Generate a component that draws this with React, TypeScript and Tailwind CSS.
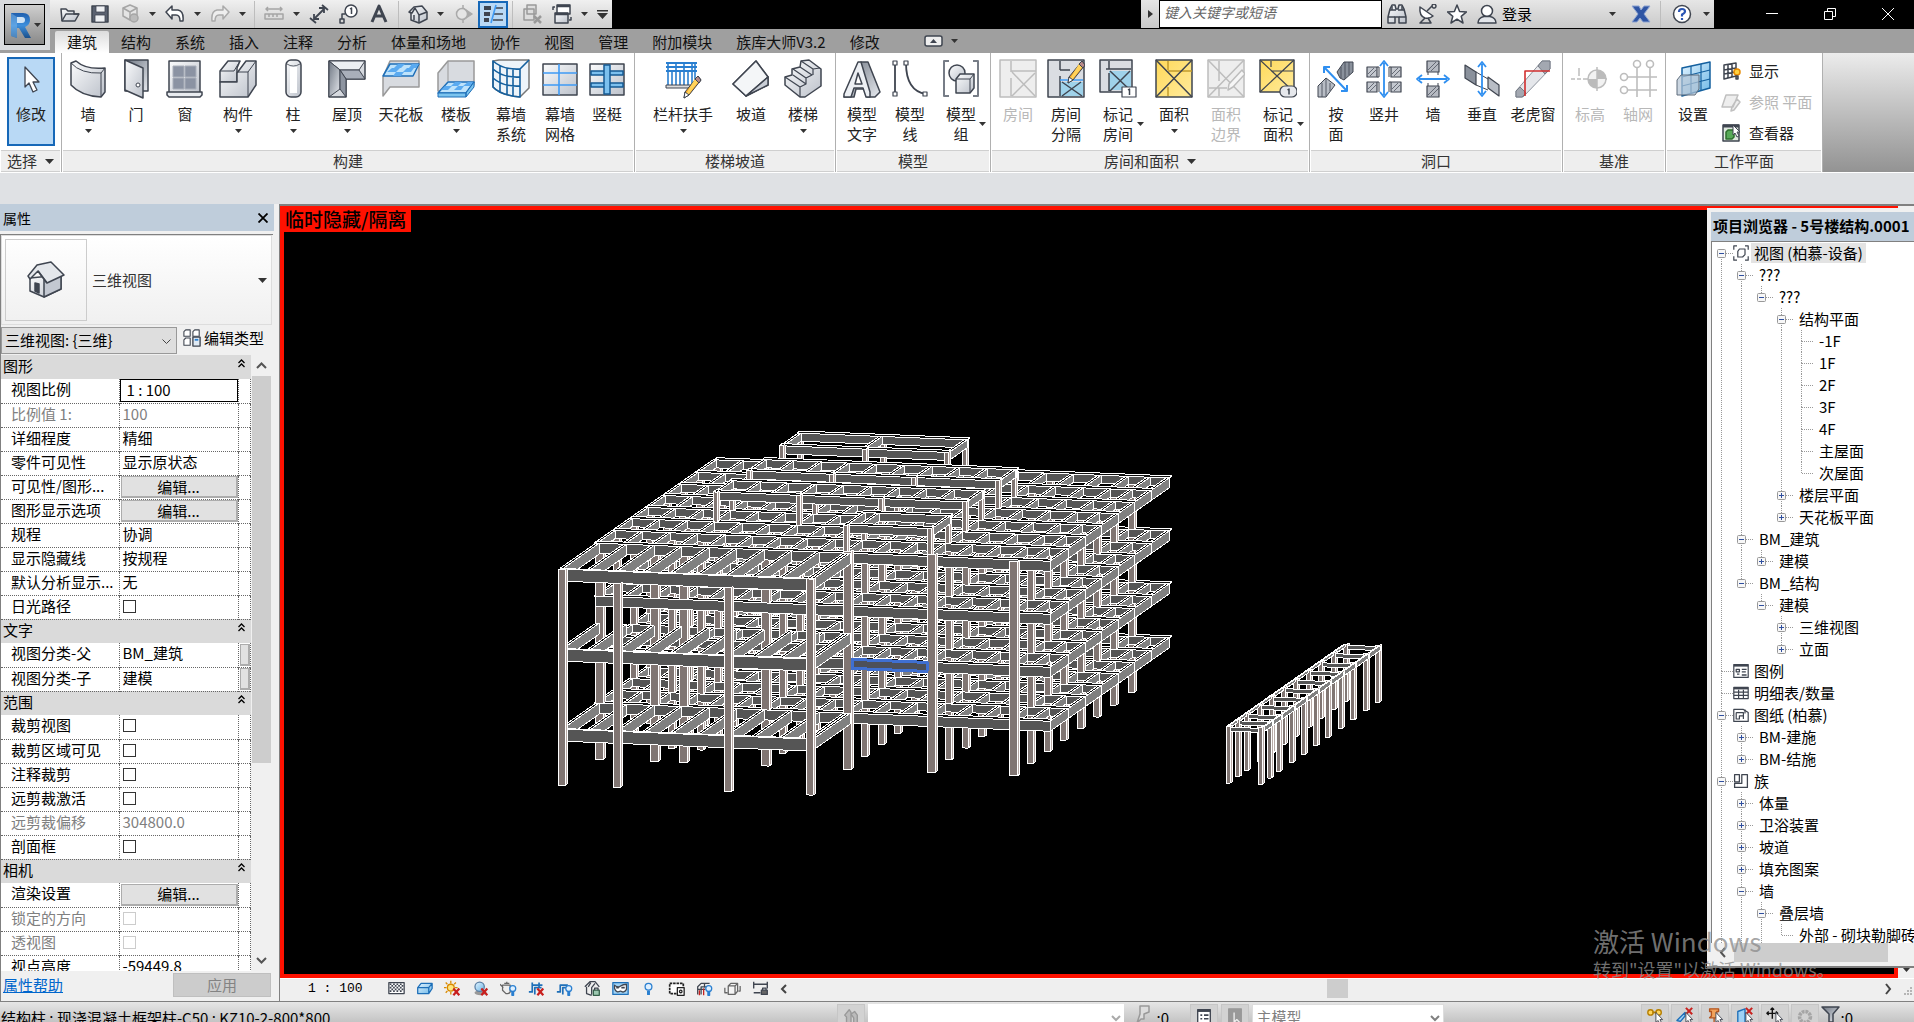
import { useState, type ReactNode } from 'react';
import { clsx } from 'clsx';

/* ---------- shared bits ---------- */

const INK = '#3f4550';
const METAL = 'url(#metal)';
const BLUE = '#2a7fd0';

function Defs() {
  return (
    <svg className="absolute h-0 w-0" aria-hidden="true">
      <defs>
        <linearGradient id="metal" x1="0" y1="0" x2="1" y2="1">
          <stop offset="0" stopColor="#fbfcfd" />
          <stop offset="1" stopColor="#bcc1ca" />
        </linearGradient>
        <linearGradient id="steel" x1="0" y1="0" x2="1" y2="1">
          <stop offset="0" stopColor="#6f7783" />
          <stop offset="1" stopColor="#e6e9ee" />
        </linearGradient>
        <linearGradient id="sky" x1="0" y1="0" x2="1" y2="1">
          <stop offset="0" stopColor="#e2f3ff" />
          <stop offset="1" stopColor="#6cb7e6" />
        </linearGradient>
        <linearGradient id="gold" x1="0" y1="0" x2="1" y2="1">
          <stop offset="0" stopColor="#ffd95a" />
          <stop offset="1" stopColor="#ffeb9c" />
        </linearGradient>
        <linearGradient id="logo" x1="0" y1="0" x2="0" y2="1">
          <stop offset="0" stopColor="#1f5fae" />
          <stop offset="0.5" stopColor="#3d8fdc" />
          <stop offset="1" stopColor="#1b4f8a" />
        </linearGradient>
      </defs>
    </svg>
  );
}

function Caret({ className }: { className?: string }) {
  return (
    <svg width="7" height="4" viewBox="0 0 7 4" className={className} aria-hidden="true">
      <path d="M0 0h7L3.5 4z" fill="#333" />
    </svg>
  );
}

function Small({ children, size = 20 }: { children: ReactNode; size?: number }) {
  return (
    <svg width={size} height={size} viewBox="0 0 20 20" fill="none" stroke={INK} strokeWidth="1.5" strokeLinejoin="round" aria-hidden="true">
      {children}
    </svg>
  );
}

function Big({ children }: { children: ReactNode }) {
  return (
    <svg width="38" height="40" viewBox="0 0 38 40" fill="none" stroke={INK} strokeWidth="1.5" strokeLinejoin="round" aria-hidden="true">
      {children}
    </svg>
  );
}

const pencil = (
  <g strokeWidth="1">
    <path d="M35 2l3 4-12 15-5 3 1-6z" fill="#f5a623" />
    <path d="M33 3l3 4-11 14-2-1z" fill="#ffd35c" stroke="none" />
    <path d="M35 2l3 4-2 3-4-4z" fill="#b98a8a" />
    <path d="M21 24l1-6 4 3z" fill="#fff" />
  </g>
);

/* ---------- ribbon icons ---------- */

const icons: Record<string, ReactNode> = {
  cursor: (
    <Big>
      <path d="M13 8v20l4-4 4 9 4-2-4-8h6z" fill="#fff" strokeWidth="1.3" />
    </Big>
  ),
  wall: (
    <Big>
      <path d="M2 4l5-2q10 9 29 7v24l-4 5Q12 37 2 26z" fill={METAL} />
      <path d="M2 4q10 11 30 10v24M32 14l4-5" strokeWidth="1" />
    </Big>
  ),
  door: (
    <Big>
      <path d="M8 1h23v31H8z" fill="url(#steel)" />
      <path d="M8 1l18 8v30L8 31z" fill={METAL} />
      <circle cx="21" cy="26" r="2" fill="#fff" strokeWidth="1" />
    </Big>
  ),
  window: (
    <Big>
      <path d="M3 2h31v32H3z" fill={METAL} />
      <path d="M7 7h11v11H7zM19 7h11v11H19zM7 19h11v11H7zM19 19h11v11H19z" fill="#8b93a3" stroke="#aab0bb" strokeWidth="1" />
      <path d="M1 33h35v3l-2 2H3l-2-2z" fill="#e9ecf0" />
    </Big>
  ),
  component: (
    <Big>
      <path d="M1 12l8-10h12l-3 7v14H1z" fill={METAL} />
      <path d="M1 23h17V14L27 2h10v24l-8 12H1z" fill={METAL} />
      <path d="M1 12h14l6-10M19 13h10l8-11M29 13v25" strokeWidth="1" />
    </Big>
  ),
  column: (
    <Big>
      <rect x="12" y="1" width="15" height="37" rx="5" fill={METAL} />
      <rect x="16" y="8" width="7" height="26" fill="#fff" stroke="none" />
      <path d="M13 5q6 4 13 0" strokeWidth="0.8" />
    </Big>
  ),
  roof: (
    <Big>
      <path d="M1 2h36v18H18v18H1z" fill={METAL} />
      <path d="M1 2l11 9h19l6-9z" fill="#eceff3" strokeWidth="1" />
      <path d="M1 2l11 9v19l-11 8z" fill="url(#steel)" strokeWidth="1" />
      <path d="M31 11l6 9H18l-6-9z" fill="#a9afba" strokeWidth="1" />
      <path d="M12 30l6 8V20l-6-9z" fill="#8d94a0" strokeWidth="1" />
    </Big>
  ),
  ceiling: (
    <Big>
      <path d="M8 2h29v26H8L1 37V18z" fill="#d8dbe0" stroke="#999" />
      <path d="M8 5h29l-6 12H1z" fill="#bfe3fb" stroke="#1e6fb8" />
      <path d="M16 5h7l-4 4h-7zM30 5h7l-3 4h-7zM10 9h8l-4 4H5zM25 9h7l-3 4h-8zM14 13h8l-3 4h-8z" fill="#5aaaf0" stroke="none" />
    </Big>
  ),
  floor: (
    <Big>
      <path d="M11 2h26v24L30 32H1V14z" fill="#d8dbe0" stroke="#999" />
      <path d="M11 2v20" stroke="#999" strokeWidth="1" />
      <path d="M11 23h26L29 34H1z" fill="#bfe3fb" stroke="#1e6fb8" />
      <path d="M18 23h7l-4 4h-7zM31 23h5l-3 4h-7zM8 27h7l-4 4H4zM21 27h6l-3 4h-7z" fill="#5aaaf0" stroke="none" />
      <path d="M1 34h28v4H1zM29 34l8-11v5l-8 10z" fill="#7cc4ee" stroke="#1e6fb8" strokeWidth="1" />
    </Big>
  ),
  curtain: (
    <Big>
      <path d="M1 2l6-1h30v28l-9 9Q8 36 1 28z" fill="#edf4fa" stroke="#777" />
      <path d="M1 2q10 9 27 8v28Q8 36 1 28zM1 10q10 9 27 8M1 19q10 9 27 8M8 6v28M15 9v27M21 10v27M28 10l9-9" stroke="#14609f" strokeWidth="1.6" />
    </Big>
  ),
  grid: (
    <Big>
      <path d="M2 5h34v31H2z" fill={METAL} />
      <path d="M2 14h34M2 26h34M18 5v31" stroke="#3f9bf5" strokeWidth="1.6" />
    </Big>
  ),
  mullion: (
    <Big>
      <path d="M2 5h34v31H2z" fill={METAL} />
      <path d="M3 12h32v4H3zM3 24h32v4H3z" fill="#7cc0ee" stroke="#145a94" />
      <path d="M16 6h6v29h-6z" fill="#7cc0ee" stroke="#145a94" />
    </Big>
  ),
  railing: (
    <Big>
      <path d="M2 4h31M2 8h31M2 12h31" stroke={BLUE} strokeWidth="2" />
      <path d="M4 4v23M8 12v15M12 4v23M16 12v15M20 4v23M24 12v15M28 4v23M31 4v20" stroke={BLUE} strokeWidth="1.6" />
      <path d="M2 26h28v3H2z" fill="#ddd" strokeWidth="1" />
      <g transform="translate(-1 15)">{pencil}</g>
    </Big>
  ),
  ramp: (
    <Big>
      <path d="M24 2l12 16v8L14 37 1 25z" fill={METAL} />
      <path d="M24 2L1 25l13 12L36 18z" fill="#f4f6f8" />
      <path d="M36 18v8L14 37z" fill="#c9ced6" />
    </Big>
  ),
  stair: (
    <Big>
      <path d="M17 2l8-1 12 9v17L21 38h-5L1 26v-8l7-2v-6l8-2z" fill={METAL} />
      <path d="M1 18l15 10 6-3-13-9M9 10l13 9v6M22 19l6-3-12-8M17 2l12 8v6M29 10l7-1M16 28v10" strokeWidth="1.2" />
    </Big>
  ),
  modelText: (
    <Big>
      <path d="M18 3h7l12 30-5 5h-8l-2-8h-9l-2 8H1l2-5z" fill="url(#steel)" />
      <path d="M18 3l9 30v5h-4l-3-9h-9l-3 9H1v-3L15 3z" fill="#eceff3" />
      <path d="M15 14l4 11h-7z" fill="#fff" />
    </Big>
  ),
  modelLine: (
    <Big>
      <path d="M4 4v31M15 4q0 28 20 31" strokeWidth="1.8" />
      <path d="M2 2h4v4H2zM2 33h4v4H2zM13 2h4v4h-4zM32 33h4v4h-4z" fill="#fff" strokeWidth="1.2" />
    </Big>
  ),
  modelGroup: (
    <Big>
      <path d="M7 2H2v35h5M31 2h5v35h-5" stroke="#777d87" strokeWidth="2" />
      <circle cx="15" cy="14" r="8" fill={METAL} />
      <path d="M14 20l4-5h14v14l-4 5H14z" fill={METAL} />
      <path d="M14 20h14v14M28 20l4-5" strokeWidth="1" />
    </Big>
  ),
  room: (
    <Big>
      <g stroke="#bdbdbd">
        <path d="M1 1h36v37H1z" fill="#eee" />
        <path d="M12 2v11M12 19v18M12 12h25M13 13l23 24M36 14L13 37" />
      </g>
    </Big>
  ),
  roomSplit: (
    <Big>
      <path d="M1 1h36v37H1z" fill="#dadde2" />
      <path d="M13 23h23v14H13z" fill="#9fd2ea" stroke="none" />
      <path d="M13 2v9M13 17v20M13 11h10M15 23l20 14M34 23L15 37" />
      <path d="M13 21h23" stroke="#3f9bf5" />
      {pencil}
    </Big>
  ),
  roomTag: (
    <Big>
      <path d="M1 1h32v32H1z" fill="#dadde2" />
      <path d="M10 12h22v19H10z" fill="#9fd2ea" stroke="none" />
      <path d="M10 2v8M10 14v18M7 10h25M11 12l20 19M31 12L11 32" />
      <rect x="23" y="28" width="14" height="10" fill="#fff" strokeWidth="1.2" />
      <path d="M29 31l1.5-1v6" strokeWidth="1.5" />
    </Big>
  ),
  area: (
    <Big>
      <path d="M1 1h36v37H1z" fill="url(#gold)" />
      <path d="M13 2v9M13 28v9M13 12h24" stroke="#c29c2d" />
      <path d="M1 1l36 37M37 1L1 38" />
    </Big>
  ),
  areaEdge: (
    <Big>
      <g stroke="#bdbdbd">
        <path d="M1 1h36v37H1z" fill="#eee" />
        <path d="M12 2v20M2 29h18M1 1l36 37M37 1L1 38M12 29v8" />
        <path d="M35 11l3 4-12 13-5 3 1-6z" fill="#f6f6f6" />
      </g>
    </Big>
  ),
  areaTag: (
    <Big>
      <path d="M1 1h34v32H1z" fill="url(#gold)" />
      <path d="M1 1l34 32M35 1L1 33M12 2v6M12 12h22" strokeWidth="1.2" />
      <rect x="21" y="27" width="17" height="11" rx="5" fill="#e6e8ec" strokeWidth="1.2" />
      <path d="M28.5 31l1.5-1v5.5" strokeWidth="1.5" />
    </Big>
  ),
  byFace: (
    <Big>
      <path d="M20 13L27 3h9v10L27 21l-4-2z" fill="#8a919c" strokeWidth="1" />
      <path d="M1 27l8-8 9 7L9 38H1z" fill="#b8bdc5" strokeWidth="1" />
      <path d="M24 8v11M28 3v17M32 3v13M5 24v14M9 20v17M13 24v8" strokeWidth="0.8" />
      <path d="M7 8l23 24M7 14V8h6M24 32h6v-6" stroke="#2f8ff0" strokeWidth="2" />
    </Big>
  ),
  shaft: (
    <Big>
      <g fill="#c4c8cf" strokeWidth="1.2">
        <path d="M2 8h10v10H2zM26 8h10v10H26zM2 23h10v10H2zM26 23h10v10H26z" />
      </g>
      <path d="M3 15l6-6M5 17l6-6M27 15l6-6M29 17l6-6M3 30l6-6M5 32l6-6M27 30l6-6M29 32l6-6" strokeWidth="0.7" />
      <path d="M12 8h2v10h-2M26 8h-2v10M12 23h2v10M26 23h-2v10" strokeWidth="1" />
      <path d="M19 4v32M15 7l4-5 4 5M15 33l4 5 4-5" stroke="#2f8ff0" strokeWidth="1.8" />
    </Big>
  ),
  wallOpening: (
    <Big>
      <path d="M13 2h12v11H13zM13 27h12v11H13z" fill="#b6bac2" strokeWidth="1.2" />
      <path d="M14 11l8-8M17 12l8-8M14 36l8-8M17 37l8-8" strokeWidth="0.7" />
      <path d="M14 13v3M24 13v3M14 24v3M24 24v3" strokeWidth="1" />
      <path d="M5 20h28M8 16l-5 4 5 4M30 16l5 4-5 4" stroke="#2f8ff0" strokeWidth="1.8" />
    </Big>
  ),
  vertical: (
    <Big>
      <path d="M2 6l11 7v13L2 19z" fill="#8a919c" strokeWidth="1.2" />
      <path d="M25 18l11 8v11l-11-8z" fill="#b8bdc5" strokeWidth="1.2" />
      <path d="M13 13l12 7M13 26l12 5" strokeWidth="1" />
      <path d="M19 5v30M15 8l4-5 4 5M15 32l4 5 4-5" stroke="#2f8ff0" strokeWidth="1.8" />
    </Big>
  ),
  dormer: (
    <Big>
      <path d="M2 32L28 2h8v8L9 38H2z" fill="#e5e7eb" strokeWidth="1" stroke="#8d939d" />
      <path d="M24 7l4-5h8v8l-5 5zM2 32l4-4 6 6-4 4H2z" fill="#a3a8b1" stroke="#777d87" strokeWidth="1" />
      <path d="M11 37V12h25" stroke="#d12f2f" strokeWidth="1.6" />
    </Big>
  ),
  level: (
    <Big>
      <g stroke="#bdbdbd">
        <path d="M0 20h4M6 20h4M12 20h4M16 20h20M8 9v8" />
        <circle cx="26" cy="20" r="9" fill="#f2f2f2" />
        <path d="M26 11v9h9a9 9 0 0 0-9-9zM26 29v-9h-9a9 9 0 0 0 9 9z" fill="#bbb" stroke="none" />
        <path d="M26 8v24" />
      </g>
    </Big>
  ),
  axes: (
    <Big>
      <g stroke="#bdbdbd" strokeWidth="1.6">
        <circle cx="18" cy="5" r="3.5" />
        <circle cx="31" cy="5" r="3.5" />
        <circle cx="5" cy="18" r="3.5" />
        <circle cx="5" cy="31" r="3.5" />
        <path d="M18 9v29M31 9v29M9 18h29M9 31h29" />
      </g>
    </Big>
  ),
  workPlane: (
    <Big>
      <path d="M8 9l28-6v26l-28 8z" fill="url(#sky)" stroke="#14609f" />
      <path d="M17 7v27M27 5v26M8 18l28-7M8 27l28-7" stroke="#14609f" strokeWidth="1.2" />
      <path d="M3 21l4-5h18v14l-4 6H3z" fill="#b5c4d4" fillOpacity="0.7" stroke="#5f6d7c" strokeWidth="1" />
    </Big>
  ),
};

/* ---------- title bar ---------- */

function QatButton({ label, active, children }: { label: string; active?: boolean; children: ReactNode }) {
  return (
    <button
      type="button"
      aria-label={label}
      className={clsx(
        'flex h-[27px] w-[30px] shrink-0 items-center justify-center',
        active && 'border-2 border-[#1668b8] bg-[#b9d9f5]'
      )}
    >
      <Small>{children}</Small>
    </button>
  );
}

function QatArrow() {
  return (
    <button type="button" aria-label="更多选项" className="flex h-[27px] w-[15px] shrink-0 items-center justify-center">
      <Caret />
    </button>
  );
}

function Divider() {
  return <span className="mx-1 h-[27px] w-px shrink-0 bg-[#bdbdbd]" />;
}

function QuickAccess() {
  return (
    <div className="flex h-7 shrink-0 items-center bg-linear-to-b from-[#f0f0f0] to-[#cfcfcf] pl-[5px]">
      <QatButton label="打开">
        <path d="M1 5h5l2 2h6v3h5l-4 7H2z" fill={METAL} />
        <path d="M2 17l4-7h13" />
      </QatButton>
      <QatButton label="保存">
        <path d="M2 2h16v16H2z" fill="#5a6170" />
        <path d="M6 2h9v6H6zM5 11h10v7H5z" fill="#eef0f3" strokeWidth="0.8" />
      </QatButton>
      <QatButton label="同步">
        <g stroke="#a5a5a5">
          <path d="M10 1l7 3v8l-7 4-7-4V4z" fill="#e4e4e4" />
          <path d="M3 4l7 4 7-4M10 8v8" />
          <circle cx="14" cy="14" r="4" fill="#bbb" />
        </g>
      </QatButton>
      <QatArrow />
      <QatButton label="放弃">
        <path d="M1 8l6-6v4h6q6 1 5 11h-3q0-6-4-6H7v4z" fill="#fff" />
      </QatButton>
      <QatArrow />
      <QatButton label="重做">
        <path d="M19 8l-6-6v4H7Q1 7 2 17h3q0-6 4-6h4v4z" fill="#eee" stroke="#aaa" />
      </QatButton>
      <QatArrow />
      <Divider />
      <QatButton label="测量">
        <g stroke="#a5a5a5">
          <path d="M2 5h16M4 3L2 5l2 2M16 3l2 2-2 2" />
          <path d="M1 10h18v5H1z" fill="#ddd" />
          <path d="M5 10v3M9 10v3M13 10v3" />
        </g>
      </QatButton>
      <QatArrow />
      <QatButton label="对齐尺寸标注">
        <path d="M5 15L15 5M10 4h5v5M5 10v5h5M1 14l6 5M13 1l6 5" strokeWidth="1.8" />
      </QatButton>
      <QatButton label="按类别标记">
        <circle cx="12" cy="7" r="6" fill="#fff" />
        <path d="M11 5l1.5-1v6M6 10H3v5" strokeWidth="1.5" />
        <path d="M1 15h4v4H1z" />
      </QatButton>
      <QatButton label="文字">
        <path d="M3 18L10 2l7 16M6 12h8" strokeWidth="3" />
      </QatButton>
      <Divider />
      <QatButton label="默认三维视图">
        <path d="M1 8l5-5 8-1 5 6v7l-8 4-8-3V9z" fill={METAL} />
        <path d="M11 19v-8l8-3M1 8l3 1 3-5 4 7M6 16v-5" />
      </QatButton>
      <QatArrow />
      <QatButton label="剖面">
        <path d="M10 1v18M10 4l9 6-9 6z" fill="#aaa" stroke="#aaa" />
        <circle cx="9" cy="10" r="5.5" fill="#e5e5e5" stroke="#aaa" />
      </QatButton>
      <QatButton label="细线" active>
        <path d="M1 4h7M1 10h6M1 16h5" strokeWidth="4" />
        <path d="M12 4h8M11 10h9M10 16h10" strokeWidth="1.5" />
        <path d="M13 1L8 19" stroke="#3f9bf5" strokeWidth="1.6" />
      </QatButton>
      <Divider />
      <QatButton label="关闭隐藏窗口">
        <g stroke="#999">
          <path d="M5 1h9v9H5zM2 5h10v11H2z" fill="#ddd" />
          <path d="M12 12l7 7M19 12l-7 7" strokeWidth="2.5" />
        </g>
      </QatButton>
      <QatButton label="切换窗口">
        <path d="M5 1h13v9H5z" fill="#fff" />
        <path d="M3 9h13v10H3z" fill={METAL} />
        <path d="M5 2h13M3 10h13" strokeWidth="2.5" />
        <path d="M1 6V3h2M19 13v3h-2" />
      </QatButton>
      <QatArrow />
      <button type="button" aria-label="自定义快速访问工具栏" className="flex h-[27px] w-5 items-center justify-center">
        <svg width="11" height="9" viewBox="0 0 11 9" aria-hidden="true">
          <path d="M0 0h11v1.5H0zM0 3h11L5.5 9z" fill="#333" />
        </svg>
      </button>
    </div>
  );
}

function InfoCenter() {
  return (
    <div className="flex h-7 shrink-0 items-center bg-linear-to-b from-[#e6e6e6] to-[#c9c9c9]">
      <button type="button" aria-label="展开搜索" className="flex h-7 w-[18px] items-center justify-center">
        <svg width="5" height="8" viewBox="0 0 5 8" aria-hidden="true">
          <path d="M0 0l5 4-5 4z" fill="#333" />
        </svg>
      </button>
      <input
        type="text"
        aria-label="搜索"
        placeholder="键入关键字或短语"
        className="h-7 w-[223px] border border-black bg-white px-1 pb-1 text-[14px] italic placeholder:text-[#666] placeholder:italic"
      />
      <QatButton label="查找">
        <path d="M3 5l2-4h3l1 4h2l1-4h3l2 4 2 8v6h-7v-6H8v6H1v-6z" fill={METAL} />
        <path d="M3 6h6M11 6h6M1 13h7M12 13h7M5 2v4M15 2v4" />
      </QatButton>
      <QatButton label="通讯中心">
        <path d="M3 3q-1 9 5 11 5 1 8-2z" fill="#fff" />
        <path d="M10 7l5-5M15 2a2 2 0 1 1 0 .1M8 14l-5 5h11l-3-5" strokeWidth="1.5" />
      </QatButton>
      <QatButton label="收藏夹">
        <path d="M10 1l2.6 6.5 6.9.4-5.3 4.4 1.8 6.7-6-3.8-6 3.8 1.8-6.7L.5 7.9l6.9-.4z" fill="#fff" />
      </QatButton>
      <QatButton label="用户">
        <circle cx="10" cy="7" r="5.5" fill="#fff" />
        <path d="M1 19q0-5 6-6.500h6q6 1.500 6 6.500z" fill="#e3e6ea" />
      </QatButton>
      <button type="button" className="flex h-7 w-[124px] items-center justify-between pr-2.5 text-[15px] leading-5">
        登录
        <Caret />
      </button>
      <QatButton label="应用商店">
        <path d="M1 2h7l2 4 3-4h6l-6 8 6 8h-7l-3-4-3 4H1l6-8z" fill="#2f55a4" stroke="#8fa5d2" strokeWidth="1" />
      </QatButton>
      <Divider />
      <button type="button" aria-label="帮助" className="flex h-7 w-[34px] items-center justify-center">
        <Small>
          <circle cx="10" cy="10" r="8.5" fill="#fff" />
          <path d="M7 8q0-3 3-3t3 2.5q0 1.5-3 3v2M10 14v2" stroke="#2a55b5" strokeWidth="2.2" />
        </Small>
      </button>
      <QatArrow />
    </div>
  );
}

function WindowControls() {
  return (
    <div className="flex h-7 w-[200px] shrink-0 items-center justify-end gap-[38px] pr-4 text-white">
      <button type="button" aria-label="最小化">
        <svg width="20" height="20" viewBox="0 0 20 20" stroke="#fff" aria-hidden="true">
          <path d="M4 9.5h12" />
        </svg>
      </button>
      <button type="button" aria-label="还原">
        <svg width="20" height="20" viewBox="0 0 20 20" fill="none" stroke="#fff" aria-hidden="true">
          <path d="M4.5 7.5h8v8h-8zM7.5 7V4.5h8v8H13" />
        </svg>
      </button>
      <button type="button" aria-label="关闭">
        <svg width="20" height="20" viewBox="0 0 20 20" stroke="#fff" aria-hidden="true">
          <path d="M4 4l12 12M16 4L4 16" />
        </svg>
      </button>
    </div>
  );
}

const tabs = ['建筑', '结构', '系统', '插入', '注释', '分析', '体量和场地', '协作', '视图', '管理', '附加模块', '族库大师V3.2', '修改'];

function TitleArea() {
  const [active, setActive] = useState('建筑');

  return (
    <header className="flex shrink-0 bg-[#9f9f9f]">
      <div className="h-[50px] w-[50px] shrink-0 bg-[#d9dbde] pt-1 pl-1">
        <button
          type="button"
          aria-label="应用程序菜单"
          className="flex h-[41px] w-[41px] items-center justify-center gap-px border border-black bg-linear-to-b from-[#cfcfcf] to-[#8a8a8a]"
        >
          <svg width="25" height="28" viewBox="0 0 25 28" aria-hidden="true">
            <path d="M3 2h12q7 0 7 7 0 5-5 7l6 11h-6l-6-10H9v10l-6-2z" fill="url(#logo)" />
            <path d="M9 6h5q3 0 3 3t-3 3H9z" fill="#cfe3f5" />
            <path d="M3 2l6 4v21l-6-2z" fill="#7db8ea" fillOpacity="0.5" />
          </svg>
          <Caret />
        </button>
      </div>
      <div className="flex min-w-0 flex-1 flex-col">
        <div className="flex h-[29px] items-start justify-between bg-black">
          <QuickAccess />
          <div className="flex">
            <InfoCenter />
            <WindowControls />
          </div>
        </div>
        <nav className="flex h-6 items-end pl-[5px]">
          {tabs.map((tab) => (
            <button
              key={tab}
              type="button"
              onClick={() => setActive(tab)}
              className={clsx(
                'h-[22px] shrink-0 px-3 text-[15px] leading-5 text-[#111]',
                tab === active && 'rounded-t-xs bg-linear-to-b from-[#dcdcdc] to-white'
              )}
            >
              {tab}
            </button>
          ))}
          <button type="button" aria-label="最小化面板" className="ml-8 flex h-6 items-center gap-2">
            <svg width="19" height="12" viewBox="0 0 19 12" aria-hidden="true">
              <rect x="1" y="1" width="17" height="10" rx="2" fill="#eee" stroke={INK} strokeWidth="1.5" />
              <path d="M6 8l3.500-4L13 8z" fill={INK} />
            </svg>
            <Caret />
          </button>
        </nav>
      </div>
    </header>
  );
}

/* ---------- ribbon ---------- */

type Tool = {
  icon: string;
  lines: string[];
  width: string;
  menu?: 'below' | 'side';
  off?: boolean;
};

type Panel = { title: string; menu?: boolean; pad: string; tools: Tool[] };

const panels: Panel[] = [
  {
    title: '构建',
    pad: 'px-px',
    tools: [
      { icon: 'wall', lines: ['墙'], width: 'w-12', menu: 'below' },
      { icon: 'door', lines: ['门'], width: 'w-12' },
      { icon: 'window', lines: ['窗'], width: 'w-[50px]' },
      { icon: 'component', lines: ['构件'], width: 'w-14', menu: 'below' },
      { icon: 'column', lines: ['柱'], width: 'w-[54px]', menu: 'below' },
      { icon: 'roof', lines: ['屋顶'], width: 'w-[54px]', menu: 'below' },
      { icon: 'ceiling', lines: ['天花板'], width: 'w-[54px]' },
      { icon: 'floor', lines: ['楼板'], width: 'w-14', menu: 'below' },
      { icon: 'curtain', lines: ['幕墙', '系统'], width: 'w-[54px]' },
      { icon: 'grid', lines: ['幕墙', '网格'], width: 'w-11' },
      { icon: 'mullion', lines: ['竖梃'], width: 'w-[50px]' },
    ],
  },
  {
    title: '楼梯坡道',
    pad: 'px-[7px]',
    tools: [
      { icon: 'railing', lines: ['栏杆扶手'], width: 'w-20', menu: 'below' },
      { icon: 'ramp', lines: ['坡道'], width: 'w-14' },
      { icon: 'stair', lines: ['楼梯'], width: 'w-12', menu: 'below' },
    ],
  },
  {
    title: '模型',
    pad: 'px-px',
    tools: [
      { icon: 'modelText', lines: ['模型', '文字'], width: 'w-12' },
      { icon: 'modelLine', lines: ['模型', '线'], width: 'w-12' },
      { icon: 'modelGroup', lines: ['模型', '组'], width: 'w-[54px]', menu: 'side' },
    ],
  },
  {
    title: '房间和面积',
    menu: true,
    pad: 'px-0.5',
    tools: [
      { icon: 'room', lines: ['房间'], width: 'w-12', off: true },
      { icon: 'roomSplit', lines: ['房间', '分隔'], width: 'w-12' },
      { icon: 'roomTag', lines: ['标记', '房间'], width: 'w-14', menu: 'side' },
      { icon: 'area', lines: ['面积'], width: 'w-14', menu: 'below' },
      { icon: 'areaEdge', lines: ['面积', '边界'], width: 'w-12', off: true },
      { icon: 'areaTag', lines: ['标记', '面积'], width: 'w-14', menu: 'side' },
    ],
  },
  {
    title: '洞口',
    pad: 'px-px',
    tools: [
      { icon: 'byFace', lines: ['按', '面'], width: 'w-12' },
      { icon: 'shaft', lines: ['竖井'], width: 'w-12' },
      { icon: 'wallOpening', lines: ['墙'], width: 'w-[50px]' },
      { icon: 'vertical', lines: ['垂直'], width: 'w-12' },
      { icon: 'dormer', lines: ['老虎窗'], width: 'w-[54px]' },
    ],
  },
  {
    title: '基准',
    pad: 'px-0.5',
    tools: [
      { icon: 'level', lines: ['标高'], width: 'w-12', off: true },
      { icon: 'axes', lines: ['轴网'], width: 'w-12', off: true },
    ],
  },
];

function ToolButton({ tool }: { tool: Tool }) {
  return (
    <button
      type="button"
      disabled={tool.off}
      className={clsx(
        'relative flex h-[97px] shrink-0 flex-col items-center pt-1.5 text-[15px] leading-5 whitespace-nowrap',
        tool.width,
        tool.off ? 'text-[#b8b8b8]' : 'text-[#222]'
      )}
    >
      {icons[tool.icon]}
      <span className="mt-[5px] flex flex-col items-center">
        {tool.lines.map((line) => (
          <span key={line}>{line}</span>
        ))}
      </span>
      {tool.menu === 'below' && <Caret className="mt-[5px]" />}
      {tool.menu === 'side' && <Caret className="absolute right-0.5 bottom-6" />}
    </button>
  );
}

function RibbonPanel({ title, menu, children, pad }: { title: string; menu?: boolean; children: ReactNode; pad?: string }) {
  return (
    <section className="flex shrink-0 flex-col border-r border-[#b0b0b0] bg-white pr-px pl-px">
      <div className={clsx('flex flex-1 items-start', pad)}>{children}</div>
      <h2 className="flex h-[22px] items-center justify-center gap-2 border-y border-[#cfcfcf] bg-[#eeeeee] text-[15px] leading-5 text-[#333]">
        {title}
        {menu && (
          <svg width="9" height="5" viewBox="0 0 9 5" aria-hidden="true">
            <path d="M0 0h9L4.5 5z" fill="#333" />
          </svg>
        )}
      </h2>
    </section>
  );
}

function Ribbon() {
  return (
    <div className="flex h-[120px] shrink-0 border-b border-white bg-linear-to-b from-[#ececec] to-[#939393]">
      <RibbonPanel title="选择" menu>
        <button
          type="button"
          className="mt-1 mr-[5px] ml-1.5 flex h-[89px] w-12 flex-col items-center border-2 border-[#1668b8] bg-[#b9d9f5] text-[15px] leading-5 text-[#222]"
        >
          {icons.cursor}
          <span className="mt-[5px]">修改</span>
        </button>
      </RibbonPanel>
      {panels.map((panel) => (
        <RibbonPanel key={panel.title} title={panel.title} menu={panel.menu} pad={panel.pad}>
          {panel.tools.map((tool) => (
            <ToolButton key={tool.icon} tool={tool} />
          ))}
        </RibbonPanel>
      ))}
      <RibbonPanel title="工作平面" pad="pl-0.5">
        <ToolButton tool={{ icon: 'workPlane', lines: ['设置'], width: 'w-12' }} />
        <div className="flex w-[104px] flex-col gap-[11px] pt-2 pl-1 text-[15px] leading-5 whitespace-nowrap text-[#222]">
          <button type="button" className="flex items-center gap-2">
            <Small>
              <path d="M3 4l12-2v13L3 18zM7 3v14M11 3v13M3 9l12-2M3 13l12-2" fill="#fff" />
              <circle cx="16" cy="11" r="3" fill="#ffd23f" stroke="#e68a00" />
              <path d="M15 15h2v3h-2z" fill="#888" />
            </Small>
            显示
          </button>
          <button type="button" disabled className="flex items-center gap-2 text-[#b8b8b8]">
            <Small>
              <path d="M5 3h12l-5 12H1zM16 7l3 3-6 8-3 1 1-4z" fill="#eee" stroke="#c0c0c0" />
            </Small>
            参照 平面
          </button>
          <button type="button" className="flex items-center gap-2">
            <Small>
              <path d="M2 2h16v16H2z" fill="#dfe8df" />
              <path d="M2 3h16" strokeWidth="3" />
              <path d="M5 9l2-2h6v7l-2 2H5z" fill="#57a957" stroke="#2c6e2c" />
              <path d="M12 2v10l2-2 2 4 2-1-2-4h3z" fill="#fff" strokeWidth="1" />
            </Small>
            查看器
          </button>
        </div>
      </RibbonPanel>
    </div>
  );
}

/* ---------- properties palette ---------- */

type Prop = { name: string; value?: string; kind?: 'edit' | 'check' | 'scale' | 'more'; off?: boolean };

const groups: { title: string; rows: Prop[] }[] = [
  {
    title: '图形',
    rows: [
      { name: '视图比例', value: '1 : 100', kind: 'scale' },
      { name: '比例值 1:', value: '100', off: true },
      { name: '详细程度', value: '精细' },
      { name: '零件可见性', value: '显示原状态' },
      { name: '可见性/图形...', kind: 'edit' },
      { name: '图形显示选项', kind: 'edit' },
      { name: '规程', value: '协调' },
      { name: '显示隐藏线', value: '按规程' },
      { name: '默认分析显示...', value: '无' },
      { name: '日光路径', kind: 'check' },
    ],
  },
  {
    title: '文字',
    rows: [
      { name: '视图分类-父', value: 'BM_建筑', kind: 'more' },
      { name: '视图分类-子', value: '建模', kind: 'more' },
    ],
  },
  {
    title: '范围',
    rows: [
      { name: '裁剪视图', kind: 'check' },
      { name: '裁剪区域可见', kind: 'check' },
      { name: '注释裁剪', kind: 'check' },
      { name: '远剪裁激活', kind: 'check' },
      { name: '远剪裁偏移', value: '304800.0', off: true },
      { name: '剖面框', kind: 'check' },
    ],
  },
  {
    title: '相机',
    rows: [
      { name: '渲染设置', kind: 'edit' },
      { name: '锁定的方向', kind: 'check', off: true },
      { name: '透视图', kind: 'check', off: true },
      { name: '视点高度', value: '-59449.8' },
    ],
  },
];

function PropValue({ row }: { row: Prop }) {
  if (row.kind === 'edit') {
    return (
      <button
        type="button"
        aria-label={`${row.name} 编辑`}
        className="mx-px block h-[22px] w-[117px] border border-r-2 border-b-2 border-[#acacac] bg-[#e1e1e1] text-center leading-[18px]"
      >
        编辑...
      </button>
    );
  }
  if (row.kind === 'check') {
    return (
      <input
        type="checkbox"
        aria-label={row.name}
        disabled={row.off}
        className="mb-0.5 ml-[3px] block h-[13px] w-[13px] appearance-none border border-[#333] bg-white checked:bg-[#333] disabled:border-[#ccc]"
      />
    );
  }
  if (row.kind === 'scale') {
    return (
      <input
        type="text"
        aria-label={row.name}
        defaultValue={row.value}
        className="block h-[23px] w-[118px] border border-black px-1.5 pb-0.5 leading-5"
      />
    );
  }
  return <span className="block pb-[3px] pl-[3px]">{row.value}</span>;
}

function PropertiesPalette() {
  return (
    <aside className="flex w-[279px] shrink-0 flex-col bg-[#f0f0f0] text-[15px] leading-5">
      <div className="mr-[5px] flex h-[27px] shrink-0 items-center justify-between bg-[#bfcddb] pr-1.5 pl-[3px] text-[14px]">
        属性
        <button type="button" aria-label="关闭属性">
          <svg width="10" height="10" viewBox="0 0 10 10" stroke="#000" strokeWidth="1.8" aria-hidden="true">
            <path d="M0.5 0.5l9 9M9.5 0.5l-9 9" />
          </svg>
        </button>
      </div>
      <div className="mt-[3px] mr-1.5 flex min-h-0 flex-1 flex-col border-t border-l border-[#808080] pr-px">
        <button
          type="button"
          className="flex h-[90px] shrink-0 items-center border border-[#ddd] bg-linear-to-b from-white to-[#f0f0f0] pr-1 pl-[3px] text-[#333]"
        >
          <span className="flex h-[82px] w-[82px] items-center justify-center border border-[#ccc]">
            <svg width="38" height="38" viewBox="0 0 38 38" fill="none" stroke={INK} strokeWidth="1.5" strokeLinejoin="round" aria-hidden="true">
              <path d="M3 17v13l14 6 17-8V14z" fill={METAL} />
              <path d="M17 36V19l17-6v15z" fill="#c3c8d1" />
              <path d="M1 15l9-11L24 1l13 13-17 8-9-12-8 8z" fill="#e4e7eb" />
              <path d="M11 10L20 22" />
              <path d="M8 22l4 1v9l-4-2z" fill={INK} />
            </svg>
          </span>
          <span className="ml-[5px] flex-1 text-left">三维视图</span>
          <svg width="9" height="5" viewBox="0 0 9 5" aria-hidden="true">
            <path d="M0 0h9L4.5 5z" fill="#333" />
          </svg>
        </button>
        <div className="flex h-[30px] shrink-0 items-center gap-1.5">
          <span className="relative">
            <select aria-label="类型实例" className="h-[27px] w-[176px] appearance-none border border-[#999] bg-[#dedede] pl-[3px] leading-5">
              <option>三维视图: {'{三维}'}</option>
            </select>
            <svg width="9" height="6" viewBox="0 0 9 6" fill="none" stroke="#444" className="pointer-events-none absolute top-3 right-1.5" aria-hidden="true">
              <path d="M0.5 0.5l4 4 4-4" />
            </svg>
          </span>
          <button type="button" className="flex items-center gap-[3px] pb-1">
            <Small size={18}>
              <path d="M1 3l2-2h5v7H1zM11 3l2-2h5v7h-7zM1 12l2-2h5v8H1z" fill="#fff" strokeWidth="1.2" />
              <rect x="11" y="9" width="8" height="10" fill="#dfe9f3" />
              <path d="M13 12h4" stroke={BLUE} strokeWidth="2" />
            </Small>
            编辑类型
          </button>
        </div>
        <div className="flex min-h-0 flex-1">
          <div className="w-[250px] overflow-hidden bg-white">
            <table className="w-full table-fixed border-collapse">
              <colgroup>
                <col className="w-[118px]" />
                <col className="w-[119px]" />
                <col />
              </colgroup>
              {groups.map((group) => (
                <tbody key={group.title}>
                  <tr className="h-6 bg-[#dadada]">
                    <th colSpan={2} className="p-0 pb-0.5 pl-0.5 text-left font-normal">
                      {group.title}
                    </th>
                    <td className="p-0">
                      <svg width="7" height="9" viewBox="0 0 7 9" fill="none" stroke="#000" strokeWidth="1.3" className="mb-2" aria-hidden="true">
                        <path d="M0.5 4l3-3 3 3M0.5 8l3-3 3 3" />
                      </svg>
                    </td>
                  </tr>
                  {group.rows.map((row) => (
                    <tr key={row.name} className={clsx('h-6 border-b border-dotted border-[#666]', row.off && 'text-[#808080]')}>
                      <th className="overflow-hidden border-r border-dotted border-[#666] p-0 pb-[3px] pl-2.5 text-left font-normal whitespace-nowrap">
                        {row.name}
                      </th>
                      <td className="border-r border-dotted border-[#666] p-0">
                        <PropValue row={row} />
                      </td>
                      <td className="border-r border-dotted border-[#666] p-0">
                        {row.kind === 'more' && (
                          <button
                            type="button"
                            aria-label={`${row.name} 更多`}
                            className="ml-px block h-[22px] w-2.5 border border-r-2 border-b-2 border-[#acacac] bg-[#e1e1e1]"
                          />
                        )}
                      </td>
                    </tr>
                  ))}
                </tbody>
              ))}
            </table>
          </div>
          <div className="ml-px flex w-[19px] flex-col items-center">
            <svg width="19" height="21" viewBox="0 0 19 21" fill="none" stroke="#555" strokeWidth="2" aria-hidden="true">
              <path d="M5 13l4.5-4.5L14 13" />
            </svg>
            <div className="h-[387px] w-full bg-[#cdcdcd]" />
            <svg width="19" height="21" viewBox="0 0 19 21" fill="none" stroke="#555" strokeWidth="2" className="mt-auto" aria-hidden="true">
              <path d="M5 8l4.5 4.5L14 8" />
            </svg>
          </div>
        </div>
        <div className="flex h-[30px] shrink-0 items-start justify-between pt-0.5 pr-px pl-0.5">
          <a href="#help" className="pt-0.5 text-[#0066cc] underline">
            属性帮助
          </a>
          <button type="button" disabled className="h-6 w-[98px] border border-[#bfbfbf] bg-[#cccccc] text-[#838383]">
            应用
          </button>
        </div>
      </div>
    </aside>
  );
}

/* ---------- 3D model ---------- */

type Pt = [number, number];

// Parallel projection: u runs along the facade, v into the depth, z is height above the roof line
function makeProjection(ox: number, oy: number) {
  return (u: number, v: number, z: number): Pt => [ox + u + v, oy + 0.04 * u - 0.7 * v - z];
}

const poly = (...pts: Pt[]) => pts.map(([x, y]) => `${x.toFixed(1)},${y.toFixed(1)}`).join(' ');

type Face = { points: string; fill: string; stroke?: string };

type Projection = ReturnType<typeof makeProjection>;

function beamU(p: Projection, u0: number, u1: number, v: number, z: number, h: number, depth = 3): Face[] {
  return [
    { points: poly(p(u0, v, z), p(u1, v, z), p(u1, v + depth, z), p(u0, v + depth, z)), fill: '#111' },
    { points: poly(p(u0, v, z), p(u1, v, z), p(u1, v, z - h), p(u0, v, z - h)), fill: '#555555' },
  ];
}

function beamV(p: Projection, u: number, v0: number, v1: number, z: number, h: number, depth = 3): Face[] {
  return [
    { points: poly(p(u, v0, z), p(u, v1, z), p(u, v1, z - h), p(u, v0, z - h)), fill: '#808080' },
    { points: poly(p(u - depth, v0, z), p(u, v0, z), p(u, v1, z), p(u - depth, v1, z)), fill: '#111' },
  ];
}

function post(p: Projection, u: number, v: number, z0: number, z1: number, w: number): Face[] {
  return [
    { points: poly(p(u + w, v, z0), p(u + w, v + 2, z0), p(u + w, v + 2, z1), p(u + w, v, z1)), fill: '#b8aaa6' },
    { points: poly(p(u, v, z0), p(u + w, v, z0), p(u + w, v, z1), p(u, v, z1)), fill: '#807572' },
  ];
}

const range = (from: number, to: number, step: number) => {
  const out: number[] = [];
  for (let n = from; n <= to; n += step) out.push(n);
  return out;
};

function buildBlock(): Face[] {
  const p = makeProjection(558, 569);
  const faces: Face[] = [];
  const rows = [156, 138, 121, 105, 88, 72, 55, 37];
  const levels = [-160, -106, -53, 0];
  const cols = [0, 55, 84, 166, 248, 332, 414];
  const bays = [...range(2, 420, 27.5), 436, 455];
  // penthouse frames standing on the roof: front row, back row, extent and height
  const frames = [
    { front: 138, back: 156, from: 83, to: 248, z: 30, posts: [83, 166, 248], beams: [87, 168, 253] },
    { front: 105, back: 121, from: 83, to: 332, z: 28, posts: [83, 166, 248, 332], beams: range(87, 337, 27.7) },
    { front: 72, back: 88, from: 83, to: 332, z: 30, posts: [83, 166, 248, 332], beams: range(87, 337, 27.7) },
    { front: 37, back: 55, from: 248, to: 332, z: 28, posts: [248, 332], beams: [252, 266, 337] },
  ];

  rows.forEach((v, i) => {
    const w = v === 37 ? 8 : 6;
    const behind = rows[i - 1];
    levels.forEach((z, li) => {
      const h = 8;
      if (behind !== undefined) {
        bays.forEach((u) => faces.push(...beamV(p, u, v, behind, z, u === 455 ? 10 : h)));
      }
      cols.forEach((u) => faces.push(...post(p, u, v, li === 0 ? -216 : levels[li - 1], z, w)));
      faces.push(...beamU(p, 0, 455, v, z, v === 37 ? 10 : h));
    });
    frames.forEach((f) => {
      if (f.back === v) {
        f.posts.forEach((u) => faces.push(...post(p, u, v, 0, f.z, 4)));
        faces.push(...beamU(p, f.from, f.to + 5, v, f.z, 8));
      }
      if (f.front === v) {
        f.beams.forEach((u) => faces.push(...beamV(p, u, f.front, f.back, f.z, 8)));
        faces.push(...beamU(p, f.from, f.to + 5, v, f.z, 8));
        f.posts.forEach((u) => faces.push(...post(p, u, v, 0, f.z, 4)));
      }
    });
  });

  // the main facade posts run in front of the beams
  [248, 332, 414].forEach((u) => faces.push(...post(p, u, 37, -216, u === 414 ? -2 : 2, 8)));
  faces.push({
    points: poly(p(257, 37, -106), p(332, 37, -106), p(332, 37, -115), p(257, 37, -115)),
    fill: '#4d5058',
    stroke: '#3f6fd0',
  });

  // protruding wing with two double-height storeys
  const wing = [-160, -80, 0];
  wing.forEach((z) => {
    range(4, 252, 27.5).concat(255).forEach((u) => faces.push(...beamV(p, u, 1, 37, z, 11)));
  });
  wing.forEach((z) => faces.push(...beamU(p, 2, 252, 0, z, 12, 1)));
  [0, 55, 166, 248].forEach((u) => {
    faces.push(...post(p, u, 0, -216, u === 0 || u === 248 ? 0 : -12, 7));
  });
  return faces;
}

function buildPergola(): Face[] {
  const p = makeProjection(1226, 726);
  const faces: Face[] = [];
  const stations = [117, 105, 92, 80, 67, 55, 43, 31, 18, 9, 0];
  stations.forEach((v, i) => {
    const behind = stations[i - 1];
    if (behind !== undefined) {
      faces.push(...beamV(p, 2, v, behind, 0, 3, 1));
      faces.push(...beamV(p, 37, v, behind, 0, 5, 1));
    }
    faces.push(...post(p, 0, v, -57, 0, 4));
    faces.push(...post(p, 32, v, -57, 0, 4));
    faces.push(...beamU(p, 4, 32, v, -1, 4, 0));
  });
  return faces;
}

const modelFaces = [...buildBlock(), ...buildPergola()];

function Viewport() {
  return (
    <div className="flex min-h-0 flex-1 bg-[#f0f0f0]">
      <div className="relative min-w-0 flex-1 overflow-hidden border-4 border-[#ff1100] bg-black">
        <svg className="block h-full w-full" shapeRendering="crispEdges" role="img" aria-label="三维模型">
          <g transform="translate(-284 -210)" strokeWidth="1" strokeLinejoin="round">
            {modelFaces.map((face, i) => (
              <polygon key={i} points={face.points} fill={face.fill} stroke={face.stroke ?? '#fff'} strokeWidth={face.stroke ? 3 : 1} />
            ))}
          </g>
        </svg>
        <span className="absolute top-0 left-0 h-[22px] bg-[#ff1100] pr-[5px] pl-px text-[19px] leading-[17px] font-medium text-black">
          临时隐藏/隔离
        </span>
      </div>
      <div className="flex w-4 shrink-0 items-end justify-center pb-1.5">
        <Caret />
      </div>
    </div>
  );
}

/* ---------- project browser ---------- */

type Node = { level: number; text: string; mark?: '+' | '-'; icon?: 'views' | 'legend' | 'schedule' | 'sheets' | 'family' };

const nodes: Node[] = [
  { level: 0, text: '视图 (柏慕-设备)', mark: '-', icon: 'views' },
  { level: 1, text: '???', mark: '-' },
  { level: 2, text: '???', mark: '-' },
  { level: 3, text: '结构平面', mark: '-' },
  { level: 4, text: '-1F' },
  { level: 4, text: '1F' },
  { level: 4, text: '2F' },
  { level: 4, text: '3F' },
  { level: 4, text: '4F' },
  { level: 4, text: '主屋面' },
  { level: 4, text: '次屋面' },
  { level: 3, text: '楼层平面', mark: '+' },
  { level: 3, text: '天花板平面', mark: '+' },
  { level: 1, text: 'BM_建筑', mark: '-' },
  { level: 2, text: '建模', mark: '+' },
  { level: 1, text: 'BM_结构', mark: '-' },
  { level: 2, text: '建模', mark: '-' },
  { level: 3, text: '三维视图', mark: '+' },
  { level: 3, text: '立面', mark: '+' },
  { level: 0, text: '图例', icon: 'legend' },
  { level: 0, text: '明细表/数量', icon: 'schedule' },
  { level: 0, text: '图纸 (柏慕)', mark: '-', icon: 'sheets' },
  { level: 1, text: 'BM-建施', mark: '+' },
  { level: 1, text: 'BM-结施', mark: '+' },
  { level: 0, text: '族', mark: '-', icon: 'family' },
  { level: 1, text: '体量', mark: '+' },
  { level: 1, text: '卫浴装置', mark: '+' },
  { level: 1, text: '坡道', mark: '+' },
  { level: 1, text: '填充图案', mark: '+' },
  { level: 1, text: '墙', mark: '-' },
  { level: 2, text: '叠层墙', mark: '-' },
  { level: 3, text: '外部 - 砌块勒脚砖' },
];

function continues(index: number, level: number) {
  for (let j = index + 1; j < nodes.length; j++) {
    if (nodes[j].level < level) return false;
    if (nodes[j].level === level) return true;
  }
  return level < 3;
}

const nodeIcons = {
  views: (
    <Small size={16}>
      <path d="M5 1H1v5M15 1h4v5M5 19H1v-5M15 19h4v-5" />
      <path d="M6 8l2-3h7v7l-3 3H6z" fill="#fff" />
    </Small>
  ),
  legend: (
    <Small size={16}>
      <path d="M1 2h18v16H1z" fill="#fff" />
      <path d="M1 3h18" strokeWidth="3" />
      <path d="M4 8h4v3H4zM5 14h3M11 8h6M11 11h5M11 15h6" strokeWidth="1.6" />
    </Small>
  ),
  schedule: (
    <Small size={16}>
      <path d="M1 3h18v14H1z" fill="#fff" />
      <path d="M1 4h18" strokeWidth="3" />
      <path d="M1 9h18M1 13h18M7 6v11M13 6v11" />
    </Small>
  ),
  sheets: (
    <Small size={16}>
      <path d="M1 3h12l6 4v11H1z" fill="#fff" />
      <path d="M4 7h9v8M4 7v8h4v-4h5M15 3v5" />
    </Small>
  ),
  family: (
    <Small size={16}>
      <path d="M2 2h6v9H2zM11 2h7v16H2v-5h9z" fill="#fff" strokeWidth="1.6" />
    </Small>
  ),
};

function TreeRow({ node, index }: { node: Node; index: number }) {
  const mid = (
    <svg width="20" height="22" viewBox="0 0 20 22" fill="none" stroke="#999" strokeDasharray="1 1" aria-hidden="true">
      {index > 0 && <path d="M8.5 0v11" />}
      {continues(index, node.level) && <path d="M8.5 11v11" />}
      <path d="M9 11.5h11" />
      {node.mark && (
        <g strokeDasharray="none">
          <rect x="4.5" y="7.5" width="8" height="8" rx="1" fill="#f7f7f7" />
          <path d={node.mark === '+' ? 'M6 11.5h5M8.5 9v5' : 'M6 11.5h5'} stroke="#2f4f9f" />
        </g>
      )}
    </svg>
  );

  return (
    <li className="flex h-[22px] items-center whitespace-nowrap">
      {Array.from({ length: node.level }, (_, k) => (
        <svg key={k} width="20" height="22" viewBox="0 0 20 22" stroke="#999" strokeDasharray="1 1" className="shrink-0" aria-hidden="true">
          {continues(index, k) && <path d="M8.5 0v22" />}
        </svg>
      ))}
      {node.mark ? (
        <button type="button" className="shrink-0" aria-label={`${node.mark === '+' ? '展开' : '折叠'} ${node.text}`}>
          {mid}
        </button>
      ) : (
        <span className="shrink-0">{mid}</span>
      )}
      {node.icon && <span className="shrink-0">{nodeIcons[node.icon]}</span>}
      <span className={clsx('px-[3px]', node.icon ? 'ml-0.5' : 'ml-[3px]', index === 0 && 'bg-[#e3e3e3]')}>{node.text}</span>
    </li>
  );
}

function ProjectBrowser() {
  return (
    <aside className="absolute top-1 right-0 bottom-[33px] flex w-[207px] flex-col overflow-hidden border-b-2 border-[#808080] bg-[#f0f0f0] pt-1 pl-1 text-[15px] leading-5">
      <h2 className="h-[29px] shrink-0 bg-[#bfcddb] pt-1 pl-0.5 text-[15px] leading-5 font-bold whitespace-nowrap">项目浏览器 - 5号楼结构.0001</h2>
      <ul className="min-h-0 flex-1 overflow-hidden border-t border-l border-[#808080] bg-white pl-px">
        {nodes.map((node, i) => (
          <TreeRow key={i} node={node} index={i} />
        ))}
      </ul>
      <div className="flex h-[19px] shrink-0 items-center pl-1.5">
        <svg width="17" height="19" viewBox="0 0 17 19" fill="none" stroke="#555" strokeWidth="2" aria-hidden="true">
          <path d="M8 5L4 9.5 8 14" />
        </svg>
        <div className="h-[19px] w-[154px] bg-[#cdcdcd]" />
      </div>
      <div className="h-1 shrink-0" />
    </aside>
  );
}

/* ---------- bottom bars ---------- */

const redX = <path d="M11 10l7 8M18 10l-7 8" stroke="#c8201e" strokeWidth="2.6" />;
const bulb = (
  <>
    <circle cx="15" cy="10" r="3.5" fill="#dff0ff" stroke="#2a7fd0" />
    <path d="M14 14h2v4h-2z" fill="#2a7fd0" stroke="#2a7fd0" />
  </>
);

const viewTools: { label: string; art: ReactNode }[] = [
  {
    label: '详细程度',
    art: (
      <>
        <path d="M1 3h18v13H1z" fill="#fff" />
        <path d="M2 5h16M2 9h16M2 13h16" strokeWidth="2" strokeDasharray="2 2" />
        <path d="M4 7h14M4 11h14" strokeWidth="2" strokeDasharray="2 2" />
      </>
    ),
  },
  {
    label: '视觉样式',
    art: <path d="M2 9l4-5h13v6l-4 6H2zM2 9h13v7M15 9l4-5" fill="url(#sky)" stroke="#1e6fb8" />,
  },
  {
    label: '日光路径',
    art: (
      <>
        <circle cx="8" cy="9" r="4" fill="#ffe680" stroke="#d98a00" />
        <path d="M8 1v3M8 14v3M0 9h3M13 9h3M2 3l2 2M14 3l-2 2M2 15l2-2" stroke="#d98a00" />
        {redX}
      </>
    ),
  },
  {
    label: '阴影',
    art: (
      <>
        <ellipse cx="10" cy="15" rx="7" ry="3" fill="#999" stroke="none" />
        <circle cx="9" cy="8" r="5.5" fill="url(#sky)" stroke="#5a7fa5" />
        {redX}
      </>
    ),
  },
  {
    label: '渲染',
    art: (
      <>
        <path d="M3 6h9v8q-1 2-3 2H7L3 12zM0 5l4 4M5 4h6M8 2v2" fill="#eee" stroke="#666" />
        {bulb}
      </>
    ),
  },
  {
    label: '裁剪视图',
    art: (
      <>
        <path d="M1 14h4V6h12M5 3v3M13 3v6M8 17V9h8" stroke="#1e6fb8" strokeWidth="2" />
        {redX}
      </>
    ),
  },
  {
    label: '显示裁剪区域',
    art: (
      <>
        <path d="M1 14h4V6h9M8 17V9h5" stroke="#1e6fb8" strokeWidth="2" />
        {bulb}
      </>
    ),
  },
  {
    label: '锁定三维视图',
    art: (
      <>
        <path d="M1 8l6-6h6l5 6M3 8v8l6 2M9 17V9l4-5M5 8l3-5" fill="#eee" />
        <path d="M11 12h7v6h-7z" fill="#9cc8b0" stroke="#35604a" />
        <path d="M12.5 12V9.5h4V12" />
      </>
    ),
  },
  {
    label: '临时隐藏/隔离',
    art: (
      <>
        <path d="M1 3h18v14H1z" fill="#9fd2f5" stroke="#1e6fb8" />
        <path d="M3 6q4 4 7 1 3-2 7-2v6q-3 5-7 2-5 3-7-3z" fill="#fff" />
        <path d="M5 9h3M11 9h4" strokeWidth="2" />
      </>
    ),
  },
  {
    label: '显示隐藏的图元',
    art: (
      <>
        <circle cx="10" cy="8" r="4" fill="#dff0ff" stroke="#2a7fd0" />
        <path d="M9 13h2v4H9z" fill="#2a7fd0" stroke="#2a7fd0" />
      </>
    ),
  },
  {
    label: '临时视图属性',
    art: (
      <>
        <path d="M2 4h16v12H2z" fill="#fff" stroke="#222" strokeDasharray="3 1" strokeWidth="2" />
        <path d="M11 9h8v9h-8z" fill="#fff" stroke="#222" />
        <circle cx="15" cy="13.5" r="1.5" stroke="#222" />
      </>
    ),
  },
  {
    label: '显示分析模型',
    art: (
      <>
        <path d="M2 17V8l4-4h10M6 17V8h7M2 11h9M10 4v5" />
        <path d="M4 12v6M9 10v8" stroke="#c8201e" />
        {bulb}
      </>
    ),
  },
  {
    label: '高亮显示位移集',
    art: <path d="M5 7l3-3h8v9l-3 4H5zM5 7h8v10M13 7l3-3M1 9v6h3M19 7v6h-2" fill="#f4f4f4" stroke="#666" />,
  },
  {
    label: '显示约束',
    art: (
      <>
        <path d="M2 2v8M18 2v8M2 5h16M2 15h8" strokeWidth="1.6" />
        <path d="M11 12h7v5h-7z" fill="#666" />
        <path d="M12.5 12V9.5h4V12" />
      </>
    ),
  },
];

function ViewBar() {
  return (
    <div className="flex h-[23px] shrink-0 items-center border-t border-white bg-[#efefef] pb-[3px] pl-7">
      <span className="w-[74px] font-['Liberation_Mono',monospace] text-[13px] leading-5">1 : 100</span>
      {viewTools.map((tool) => (
        <button key={tool.label} type="button" aria-label={tool.label} className="flex w-7 shrink-0 items-center justify-center">
          <Small size={17}>{tool.art}</Small>
        </button>
      ))}
      <svg width="8" height="10" viewBox="0 0 8 10" fill="none" stroke="#444" strokeWidth="2" className="ml-1.5 shrink-0" aria-hidden="true">
        <path d="M6 1L2 5l4 4" />
      </svg>
      <div className="flex h-5 flex-1 items-center justify-end gap-[536px] pr-px">
        <div className="h-[19px] w-[21px] bg-[#cdcdcd]" />
        <div className="flex items-center gap-3">
          <svg width="8" height="12" viewBox="0 0 8 12" fill="none" stroke="#444" strokeWidth="2" aria-hidden="true">
            <path d="M2 1l4 5-4 5" />
          </svg>
          <svg width="9" height="9" viewBox="0 0 9 9" fill="#b5b5b5" className="mt-1.5" aria-hidden="true">
            <path d="M6 0h2v2H6zM3 3h2v2H3zM6 3h2v2H6zM0 6h2v2H0zM3 6h2v2H3zM6 6h2v2H6z" />
          </svg>
        </div>
      </div>
    </div>
  );
}

function StatusButton({ label, children }: { label: string; children: ReactNode }) {
  return (
    <button type="button" aria-label={label} className="flex h-6 w-7 shrink-0 items-center justify-center border border-[#c6c6c6] bg-[#d2d2d2]">
      <Small size={18}>{children}</Small>
    </button>
  );
}

const arrowHead = <path d="M11 6v11l2.500-2 2 4 2-1-2-4h3z" fill="#fff" strokeWidth="1" />;

function StatusBar() {
  return (
    <footer className="flex h-[21px] shrink-0 items-start overflow-hidden border-t border-[#808080] bg-linear-to-b from-[#e6e6e6] to-[#c4c4c4] text-[15px] leading-5">
      <span className="min-w-0 flex-1 pt-1 pl-px leading-6 whitespace-nowrap">结构柱 : 现浇混凝土框架柱-C50 : KZ10-2-800*800</span>
      <div className="flex gap-[3px] pt-0.5">
        <StatusButton label="工作集">
          <path d="M3 9l5-6 2 3v12H5v-7zM10 8l4-3 3 4v9h-4v-6z" fill="#bbb" stroke="#999" />
        </StatusButton>
        <select aria-label="活动工作集" className="h-7 w-[256px] bg-white text-[#aaa]" />
        <span className="flex w-[60px] items-start gap-1 pl-1.5">
          <Small>
            <path d="M7 2h9v6l-5 2v5H8l-4 4 3-9z" fill="#ddd" stroke="#999" />
          </Small>
          <span className="pt-1">:0</span>
        </span>
        <StatusButton label="设计选项">
          <path d="M3 3h14v16H3z" fill="#fff" />
          <path d="M3 4h14" strokeWidth="3" />
          <path d="M6 9h2M10 9h5M6 13h2M10 13h5" strokeWidth="1.8" />
        </StatusButton>
        <StatusButton label="添加到集">
          <path d="M3 2h14v17H3z" fill="#999" stroke="#999" />
          <path d="M9 6v11l3-3 5 5" stroke="#eee" />
        </StatusButton>
        <select aria-label="设计选项集" className="h-7 w-[192px] border border-[#ddd] bg-white pb-1 text-[#808080]">
          <option>主模型</option>
        </select>
      </div>
      <div className="flex gap-0.5 pt-0.5 pr-[61px] pl-[197px]">
        <StatusButton label="选择链接">
          <circle cx="5" cy="6" r="3" fill="#ffd65c" stroke="#b57e00" />
          <circle cx="14" cy="6" r="3" fill="#ffd65c" stroke="#b57e00" />
          <path d="M7 6h5" stroke="#b57e00" strokeWidth="2" />
          {arrowHead}
        </StatusButton>
        <StatusButton label="选择基线图元">
          <path d="M1 15l9-9v4l-5 6zM3 18h9" fill="#9fd2f5" stroke="#1e6fb8" />
          <path d="M11 1l7 7M18 1l-7 7" stroke="#c8201e" strokeWidth="2.2" />
          {arrowHead}
        </StatusButton>
        <StatusButton label="选择锁定图元">
          <path d="M4 2h10v3h-2v5l2 2H4l2-2V5H4zM9 12v7" fill="#f2a35c" stroke="#b3541e" />
          {arrowHead}
        </StatusButton>
        <StatusButton label="按面选择">
          <path d="M2 5l8-3v15l-8 3z" fill="#9fd2f5" stroke="#1e6fb8" />
          <path d="M11 1l7 7M18 1l-7 7" stroke="#c8201e" strokeWidth="2.2" />
          {arrowHead}
        </StatusButton>
        <StatusButton label="选择时拖拽">
          <path d="M7 1v12M1 7h12M5 3l2-2 2 2M3 5L1 7l2 2M11 5l2 2-2 2" stroke="#111" />
          {arrowHead}
        </StatusButton>
        <StatusButton label="后台进程">
          <circle cx="10" cy="11" r="6" stroke="#a5a5a5" strokeWidth="4" strokeDasharray="3 1" />
        </StatusButton>
        <span className="flex items-start">
          <Small>
            <path d="M1 3h17l-6 7v8H8v-8z" fill="url(#steel)" />
          </Small>
          <span className="pt-1">:0</span>
        </span>
      </div>
    </footer>
  );
}

/* ---------- page ---------- */

export default function App() {
  return (
    <div className="flex h-screen flex-col overflow-hidden bg-[#dfe1e4] font-['Noto_Sans_CJK_SC','Noto_Sans',sans-serif] text-black">
      <Defs />
      <TitleArea />
      <Ribbon />
      <div className="h-[31px] shrink-0" />
      <main className="relative flex min-h-0 flex-1">
        <PropertiesPalette />
        <div className="flex min-w-0 flex-1 flex-col border-t-2 border-l border-[#808080]">
          <Viewport />
          <ViewBar />
        </div>
        <ProjectBrowser />
        <div className="pointer-events-none absolute right-[86px] bottom-5 w-[235px] whitespace-nowrap text-[#8e8e8e]/80">
          <p className="text-[26px] leading-8">激活 Windows</p>
          <p className="text-[18px] leading-6">转到"设置"以激活 Windows。</p>
        </div>
      </main>
      <StatusBar />
    </div>
  );
}
